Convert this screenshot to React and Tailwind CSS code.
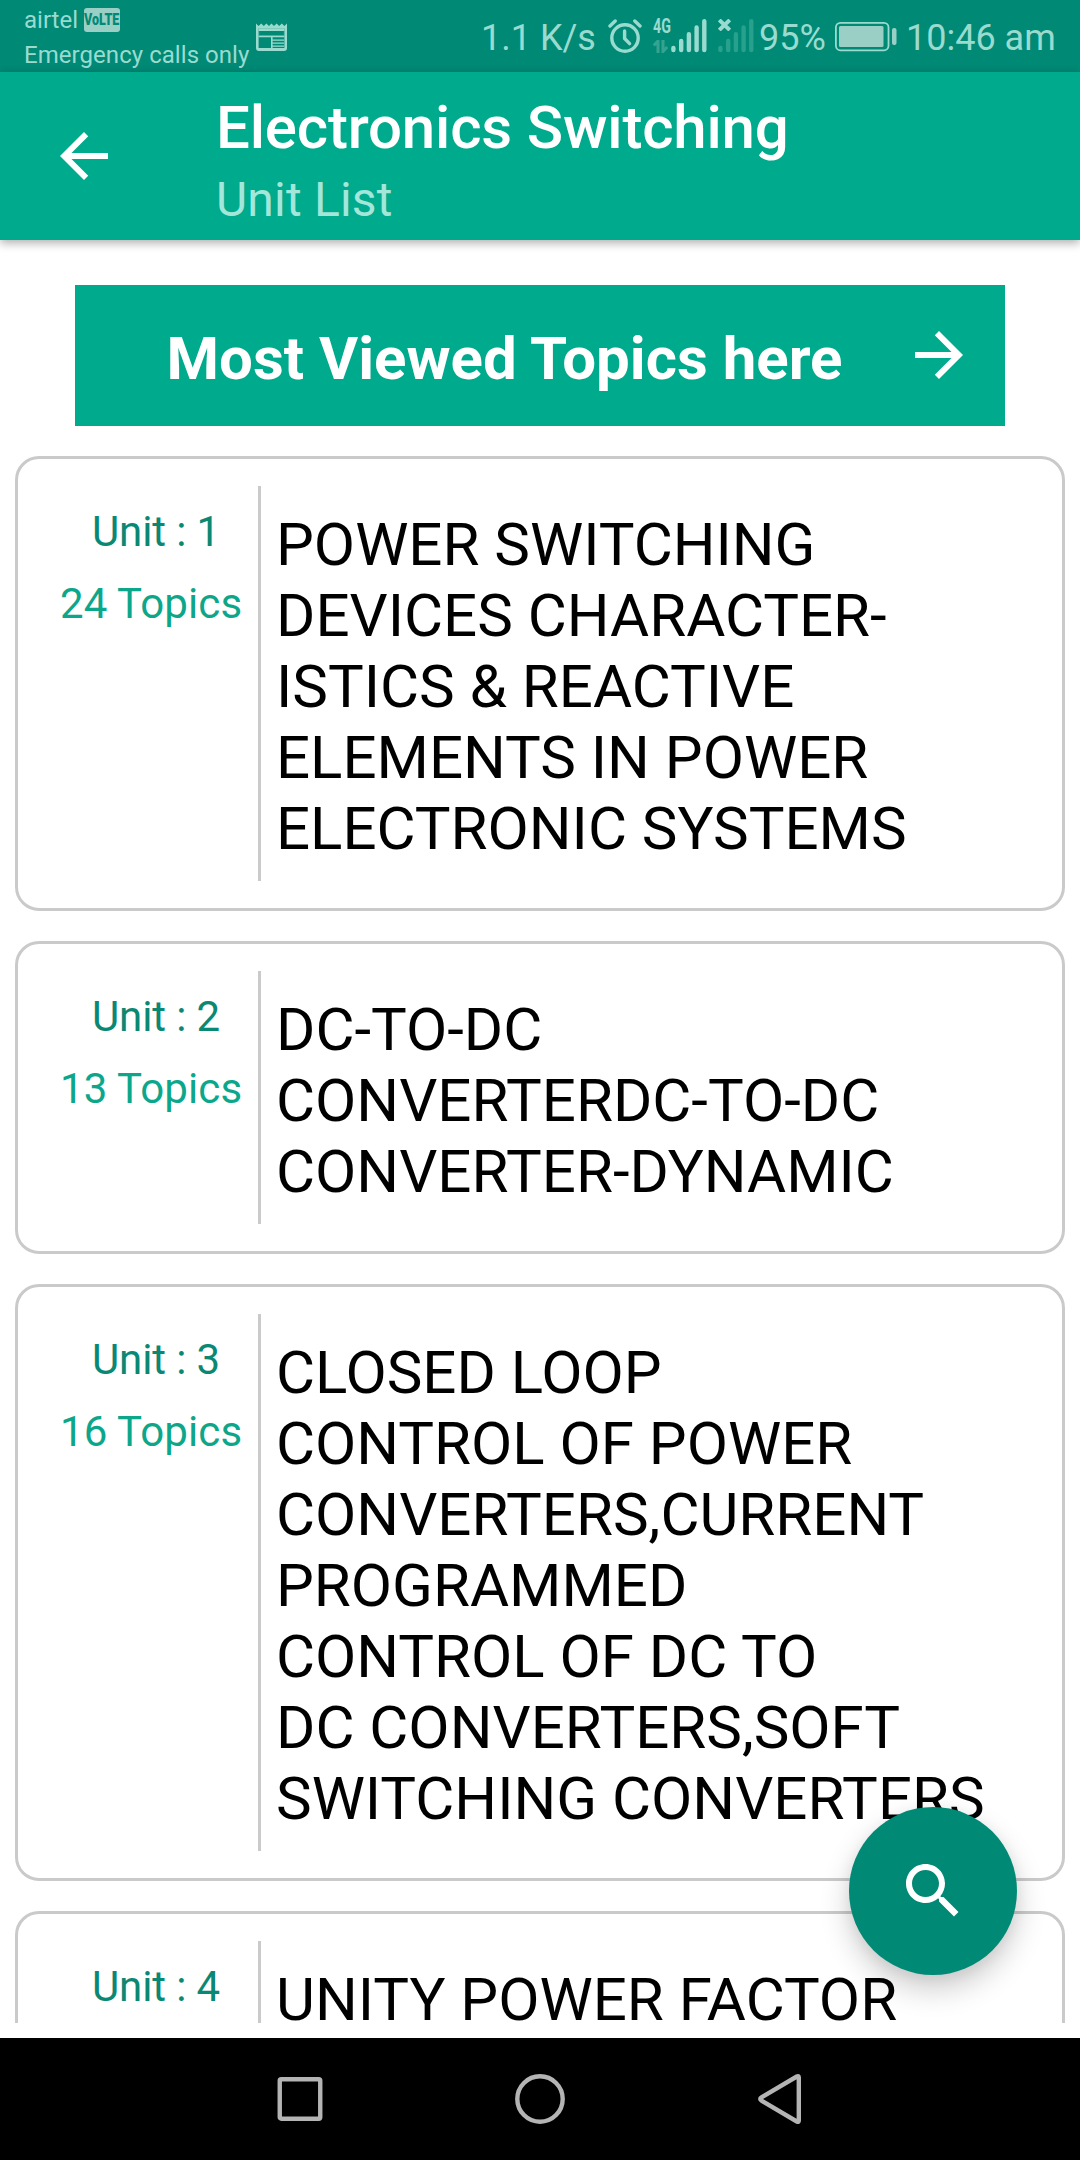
const units = [
  {
    id: 1,
    topics: 24,
    lines: [
      'POWER SWITCHING',
      'DEVICES CHARACTER-',
      'ISTICS & REACTIVE',
      'ELEMENTS IN POWER',
      'ELECTRONIC SYSTEMS',
    ],
  },
  {
    id: 2,
    topics: 13,
    lines: ['DC-TO-DC', 'CONVERTERDC-TO-DC', 'CONVERTER-DYNAMIC'],
  },
  {
    id: 3,
    topics: 16,
    lines: [
      'CLOSED LOOP',
      'CONTROL OF POWER',
      'CONVERTERS,CURRENT',
      'PROGRAMMED',
      'CONTROL OF DC TO',
      'DC CONVERTERS,SOFT',
      'SWITCHING CONVERTERS',
    ],
  },
  {
    id: 4,
    lines: ['UNITY POWER FACTOR'],
  },
];

function NewsIcon() {
  return (
    <svg width="31" height="28" viewBox="0 0 31 28" className="mt-[22.5px] ml-2 shrink-0" fill="currentColor">
      <path
        fillRule="evenodd"
        d="M0 0.5 L2.6 3 L5.2 0.5 L7.8 3 L10.4 0.5 L13 3 L15.5 0.5 L18 3 L20.6 0.5 L23.2 3 L25.8 0.5 L28.4 3 L31 0.5 V25 a3 3 0 0 1 -3 3 H3 a3 3 0 0 1 -3 -3 Z M2.6 5.2 V25 H28.4 V5.2 Z M3.6 8 V12.6 H27.4 V8 Z"
      />
      <path d="M3.6 14 H14.6 V25 H3.6 Z" fill="#008975" />
      <path d="M2.6 12.6 H28.4 V14.2 H2.6 Z M15 13 H16.6 V26 H15 Z M2.6 5.2 H28.4 V8 H2.6 Z M16.4 16.4 H28 V17.8 H16.4 Z M16.4 19.4 H28 V20.8 H16.4 Z M16.4 22.4 H28 V23.8 H16.4 Z" />
      <path d="M3.2 8 H27.8 V12.4 H3.2 Z" fill="#008975" />
    </svg>
  );
}

function AlarmIcon() {
  return (
    <svg width="34" height="34" viewBox="0 0 34 34" className="mt-[19px] ml-[12px] shrink-0" fill="none" stroke="currentColor">
      <circle cx="17" cy="19" r="13.2" strokeWidth="3.4" />
      <path d="M16.6 12 V19.5 L21.6 24.6" strokeWidth="3.4" strokeLinecap="round" />
      <path d="M2 7 L7.2 2 M32 7 L26.8 2" strokeWidth="3.4" strokeLinecap="round" />
    </svg>
  );
}

function SignalBars({ className }) {
  return (
    <svg width="36" height="34" viewBox="0 0 36 34" className={className} stroke="currentColor" strokeWidth="4.4" strokeLinecap="round">
      <path d="M2.4 29 V31.1 M10.2 22 V31.1 M17.9 15.2 V31.1 M25.6 8.4 V31.1 M33.3 2.2 V31.1" />
    </svg>
  );
}

function StatusBar() {
  return (
    <div className="flex h-[72px] justify-between bg-[#008975] text-[#9adbd0]">
      <div className="flex pl-[24px]">
        <div className="w-[224px] text-[24px] leading-[35px] whitespace-nowrap">
          <div className="flex h-[36px] pt-[3px]">
            airtel
            <span className="mt-[5px] ml-[6px] flex h-[24px] w-[36px] items-center justify-center rounded-[3px] bg-[#9acfc6] text-[#008975]">
              <span className="scale-x-[0.78] scale-y-[1.08] text-[16px] leading-none font-black">VoLTE</span>
            </span>
          </div>
          <div className="pt-[2px] tracking-[0.05px]">Emergency calls only</div>
        </div>
        <NewsIcon />
      </div>

      <div className="flex pr-[24px] text-[36px] leading-[76px] whitespace-nowrap">
        <span className="w-[115px]">1.1 K/s</span>
        <AlarmIcon />
        <div className="mt-[19px] ml-[11px] w-[18px]">
          <div className="origin-left scale-x-[0.68] text-[21px] leading-[15px] font-bold">4G</div>
          <svg width="15" height="13" viewBox="0 0 15 13" className="mt-[6px] text-[#36a392]" fill="none" stroke="currentColor" strokeWidth="3">
            <path d="M5 13 V1 L0.8 5.5 M10 0 V11.5 L14.2 7" />
          </svg>
        </div>
        <SignalBars className="mt-[19px] shrink-0" />
        <div className="relative mt-[19px] ml-[11px] h-[34px] w-[36px]">
          <SignalBars className="text-[#27a08d]" />
          <svg width="13" height="12" viewBox="0 0 13 12" className="absolute top-0 left-0" stroke="currentColor" strokeWidth="4">
            <path d="M1.2 1 L11.8 11 M11.8 1 L1.2 11" />
          </svg>
        </div>
        <span className="ml-[5px] w-[69px]">95%</span>
        <svg width="62" height="30" viewBox="0 0 62 30" className="mt-[22px] ml-[7px] shrink-0">
          <rect x="0.9" y="0.9" width="52.6" height="27.4" rx="4.5" fill="none" stroke="currentColor" strokeWidth="1.8" />
          <rect x="4" y="4" width="44.5" height="21" rx="1.5" fill="#9acfc6" />
          <rect x="57" y="6" width="4.5" height="17" rx="2" fill="#9acfc6" />
        </svg>
        <span className="ml-[9px] w-[150px]">10:46 am</span>
      </div>
    </div>
  );
}

function AppBar() {
  return (
    <header className="relative z-10 flex h-[168px] items-start bg-[#00aa8d] pl-12 text-white shadow-[0_3px_9px_rgba(0,0,0,0.32)]">
      <svg width="72" height="72" viewBox="0 0 24 24" className="mt-12" fill="currentColor">
        <path d="M20 11H7.83l5.59-5.59L12 4l-8 8 8 8 1.41-1.41L7.83 13H20v-2z" />
      </svg>
      <div className="ml-24 pt-[20px]">
        <h1 className="text-[60px] leading-[72px] font-medium tracking-[-0.18px]">Electronics Switching</h1>
        <p className="text-[48px] leading-[72px] tracking-[0.2px] text-[#a3e6da]">Unit List</p>
      </div>
    </header>
  );
}

function UnitCard({ id, topics, lines }) {
  return (
    <article className="flex shrink-0 rounded-[24px] border-[3px] border-[#cacaca] p-[27px]">
      <div className="w-[213px] shrink-0 pt-[10px] text-[42px] leading-[72px] whitespace-nowrap">
        <p className="pl-[47px] tracking-[-0.12px] text-[#0b8873]">Unit : {id}</p>
        {topics && <p className="pl-[15px] tracking-[0.1px] text-[#0ca78b]">{topics} Topics</p>}
      </div>
      <h2 className="border-l-[3px] border-[#cacaca] pt-[23px] pb-[17px] pl-[15px] text-[60px] leading-[71px] whitespace-nowrap text-black">
        {lines.map((line) => (
          <span key={line} className="block">{line}</span>
        ))}
      </h2>
    </article>
  );
}

function NavBar() {
  return (
    <nav className="flex h-[122px] items-center justify-center bg-black text-[#b4b4b4]">
      {[
        <rect key="recent" x="5.75" y="6.25" width="40.5" height="39.5" rx="1.5" />,
        <circle key="home" cx="26" cy="26" r="22.7" />,
        <path key="back" d="M44.8 4.6 V47.4 Q44.8 49.5 42.8 48.5 L7.5 27.6 Q5 26 7.5 24.4 L42.8 3.5 Q44.8 2.5 44.8 4.6 Z" />,
      ].map((shape) => (
        <button key={shape.key} className="flex w-[240px] justify-center" aria-label={shape.key}>
          <svg width="52" height="52" viewBox="0 0 52 52" fill="none" stroke="currentColor" strokeWidth="4.4">
            {shape}
          </svg>
        </button>
      ))}
    </nav>
  );
}

export default function App() {
  return (
    <div className="relative flex h-[2160px] w-[1080px] flex-col overflow-hidden bg-white font-['Roboto',sans-serif]">
      <StatusBar />
      <AppBar />

      <main className="mb-[15px] flex min-h-0 flex-1 flex-col gap-[30px] overflow-hidden px-[15px] pt-[45px]">
        <button className="mx-[60px] flex h-[141px] shrink-0 items-center bg-[#00aa8d] text-white">
          <span className="w-[828px] pt-[7px] pl-[31px] text-center text-[60px] leading-[70px] font-bold whitespace-nowrap">
            Most Viewed Topics here
          </span>
          <svg width="72" height="72" viewBox="0 0 24 24" className="mb-px shrink-0" fill="currentColor">
            <path d="M12 4l-1.41 1.41L16.17 11H4v2h12.17l-5.58 5.59L12 20l8-8z" />
          </svg>
        </button>
        {units.map((unit) => (
          <UnitCard key={unit.id} {...unit} />
        ))}
      </main>

      <NavBar />

      <button
        className="absolute top-[1807px] left-[849px] flex size-[168px] items-center justify-center rounded-full bg-[#008975] text-white shadow-[0_14px_30px_rgba(0,0,0,0.2),0_3px_14px_rgba(0,0,0,0.06)]"
        aria-label="Search"
      >
        <svg width="72" height="72" viewBox="0 0 24 24" fill="currentColor">
          <path d="M15.5 14h-.79l-.28-.27C15.41 12.59 16 11.11 16 9.5 16 5.91 13.09 3 9.5 3S3 5.91 3 9.5 5.91 16 9.5 16c1.61 0 3.09-.59 4.23-1.57l.27.28v.79l5 4.99L20.49 19l-4.99-5zm-6 0C7.01 14 5 11.99 5 9.5S7.01 5 9.5 5 14 7.01 14 9.5 11.99 14 9.5 14z" />
        </svg>
      </button>
    </div>
  );
}
